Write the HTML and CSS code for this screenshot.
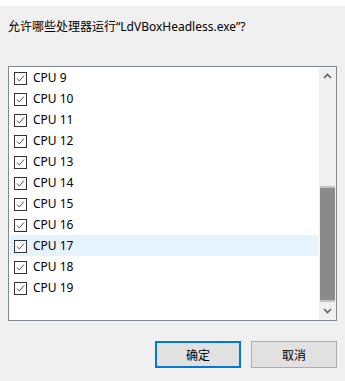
FILE: index.html
```html
<!DOCTYPE html>
<html lang="zh-CN">
<head>
    <meta charset="UTF-8">
    <title>处理器相关性</title>
    <link rel="stylesheet" href="styles.css">
</head>
<body>
    <div class="topbar"></div>
    <div class="dialog">
        <p class="prompt">允许哪些处理器运行“LdVBoxHeadless.exe”?</p>

        <div class="listbox">
            <div class="items">
                <div class="item"><span class="check"><svg width="13" height="13" viewBox="0 0 13 13"><rect x="0.5" y="0.5" width="12" height="12" fill="#fff" stroke="#333"/><polyline points="3,6.5 5.3,9 10,3.5" fill="none" stroke="#555" stroke-width="1"/></svg></span>CPU 9</div>
                <div class="item"><span class="check"><svg width="13" height="13" viewBox="0 0 13 13"><rect x="0.5" y="0.5" width="12" height="12" fill="#fff" stroke="#333"/><polyline points="3,6.5 5.3,9 10,3.5" fill="none" stroke="#555" stroke-width="1"/></svg></span>CPU 10</div>
                <div class="item"><span class="check"><svg width="13" height="13" viewBox="0 0 13 13"><rect x="0.5" y="0.5" width="12" height="12" fill="#fff" stroke="#333"/><polyline points="3,6.5 5.3,9 10,3.5" fill="none" stroke="#555" stroke-width="1"/></svg></span>CPU 11</div>
                <div class="item"><span class="check"><svg width="13" height="13" viewBox="0 0 13 13"><rect x="0.5" y="0.5" width="12" height="12" fill="#fff" stroke="#333"/><polyline points="3,6.5 5.3,9 10,3.5" fill="none" stroke="#555" stroke-width="1"/></svg></span>CPU 12</div>
                <div class="item"><span class="check"><svg width="13" height="13" viewBox="0 0 13 13"><rect x="0.5" y="0.5" width="12" height="12" fill="#fff" stroke="#333"/><polyline points="3,6.5 5.3,9 10,3.5" fill="none" stroke="#555" stroke-width="1"/></svg></span>CPU 13</div>
                <div class="item"><span class="check"><svg width="13" height="13" viewBox="0 0 13 13"><rect x="0.5" y="0.5" width="12" height="12" fill="#fff" stroke="#333"/><polyline points="3,6.5 5.3,9 10,3.5" fill="none" stroke="#555" stroke-width="1"/></svg></span>CPU 14</div>
                <div class="item"><span class="check"><svg width="13" height="13" viewBox="0 0 13 13"><rect x="0.5" y="0.5" width="12" height="12" fill="#fff" stroke="#333"/><polyline points="3,6.5 5.3,9 10,3.5" fill="none" stroke="#555" stroke-width="1"/></svg></span>CPU 15</div>
                <div class="item"><span class="check"><svg width="13" height="13" viewBox="0 0 13 13"><rect x="0.5" y="0.5" width="12" height="12" fill="#fff" stroke="#333"/><polyline points="3,6.5 5.3,9 10,3.5" fill="none" stroke="#555" stroke-width="1"/></svg></span>CPU 16</div>
                <div class="item hover"><span class="check"><svg width="13" height="13" viewBox="0 0 13 13"><rect x="0.5" y="0.5" width="12" height="12" fill="#fff" stroke="#333"/><polyline points="3,6.5 5.3,9 10,3.5" fill="none" stroke="#555" stroke-width="1"/></svg></span>CPU 17</div>
                <div class="item"><span class="check"><svg width="13" height="13" viewBox="0 0 13 13"><rect x="0.5" y="0.5" width="12" height="12" fill="#fff" stroke="#333"/><polyline points="3,6.5 5.3,9 10,3.5" fill="none" stroke="#555" stroke-width="1"/></svg></span>CPU 18</div>
                <div class="item"><span class="check"><svg width="13" height="13" viewBox="0 0 13 13"><rect x="0.5" y="0.5" width="12" height="12" fill="#fff" stroke="#333"/><polyline points="3,6.5 5.3,9 10,3.5" fill="none" stroke="#555" stroke-width="1"/></svg></span>CPU 19</div>
            </div>

            <div class="scrollbar">
                <div class="arrow"><svg width="9" height="6" viewBox="0 0 9 6"><polyline points="1,5 4.5,1.5 8,5" fill="none" stroke="#606060" stroke-width="1.6"/></svg></div>
                <div class="track">
                    <div class="thumb"></div>
                </div>
                <div class="arrow arrow-down"><svg width="9" height="6" viewBox="0 0 9 6"><polyline points="1,1 4.5,4.5 8,1" fill="none" stroke="#606060" stroke-width="1.6"/></svg></div>
            </div>
        </div>

        <div class="buttons">
            <button class="btn btn-default">确定</button>
            <button class="btn">取消</button>
        </div>
    </div>
</body>
</html>
```

FILE: styles.css
```css
* {
    margin: 0;
    padding: 0;
    box-sizing: border-box;
}

body {
    background-color: #f0f0f0;
    font-family: "Noto Sans", "Noto Sans CJK SC", sans-serif;
    font-size: 12px;
    color: #000;
    height: 381px;
    overflow: hidden;
}

.topbar {
    height: 6px;
    background-color: #fff;
}

.dialog {
    padding: 0 8px;
}

.prompt {
    padding-top: 13px;
    line-height: 16px;
    height: 29px;
}

.listbox {
    margin-top: 31px;
    height: 255px;
    width: 329px;
    border: 1px solid #828790;
    background-color: #fff;
    display: flex;
}

.items {
    flex: 1;
    padding: 0 0 0 1px;
}

.item {
    height: 21px;
    display: flex;
    align-items: center;
    padding-left: 4px;
}

.item.hover {
    background-color: #e5f3ff;
}

.check {
    display: flex;
    margin-top: 2px;
    margin-right: 6px;
}

.scrollbar {
    width: 18px;
    display: flex;
    flex-direction: column;
    background-color: #f0f0f0;
    border-left: 1px solid #fff;
}

.arrow {
    height: 17px;
    display: flex;
    align-items: center;
    justify-content: center;
}

.arrow-down {
    height: 18px;
}

.track {
    flex: 1;
    display: flex;
    flex-direction: column;
    justify-content: flex-end;
    padding: 0 1px;
}

.thumb {
    height: 116px;
    background-color: #8a8a8a;
    border-top: 2px solid #c2c2c2;
    border-bottom: 2px solid #c2c2c2;
}

.buttons {
    margin-top: 20px;
    display: flex;
    justify-content: flex-end;
    gap: 10px;
}

.btn {
    width: 86px;
    height: 27px;
    font-family: "Noto Sans CJK SC", sans-serif;
    font-size: 12px;
    background-color: #e1e1e1;
    border: 1px solid #adadad;
    color: #000;
}

.btn-default {
    border: 2px solid #0078d7;
}
```
